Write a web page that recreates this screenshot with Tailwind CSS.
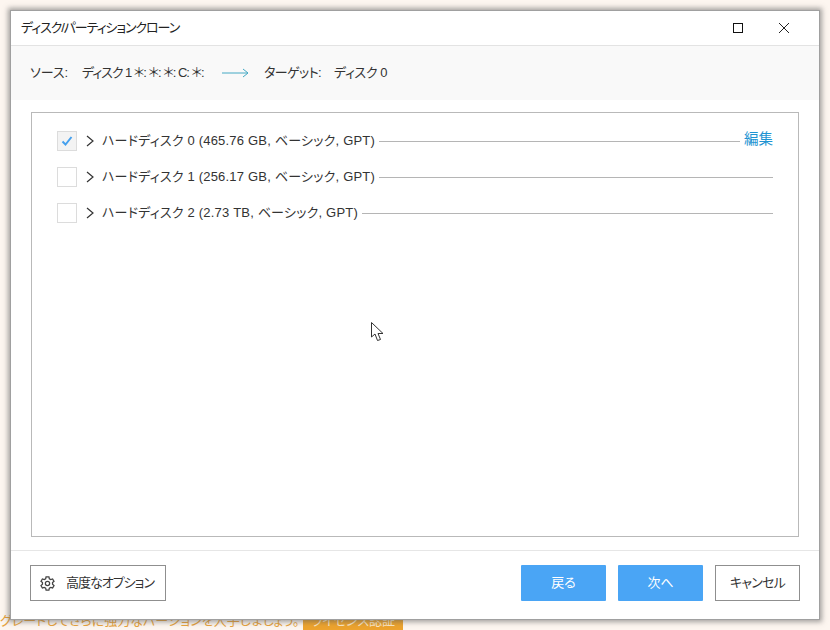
<!DOCTYPE html>
<html lang="ja">
  <head>
    <meta charset="UTF-8" />
    <script src="https://cdn.jsdelivr.net/npm/@tailwindcss/browser@4"></script>
    <title>ディスク/パーティションクローン</title>
  </head>
  <body class="relative h-[630px] w-[830px] overflow-hidden bg-[#fdf6f0] font-['Liberation_Sans','Noto_Sans_CJK_JP',sans-serif] text-[13px] text-[#333] [font-feature-settings:'palt']">
    <!-- page behind the dialog -->
    <div class="absolute left-0 right-0 top-[610px] flex h-[20px] items-end">
      <span class="w-[298px] whitespace-nowrap text-right text-[13px] leading-[18px] text-[#e8a33c]">グレードしてさらに強力なバージョンを入手しましょう。</span>
      <span class="ml-[5px] flex h-[20px] w-[100px] items-end justify-center bg-[#eda32e] text-[13px] leading-[18px] text-[#fbe6c4]">ライセンス認証</span>
    </div>

    <!-- dialog -->
    <div class="absolute left-[10px] top-[10px] flex h-[610px] w-[810px] flex-col border border-[#a0a0a0] bg-white shadow-[0_0_5px_2px_rgba(90,90,90,0.55)]">
      <div class="flex h-[35px] shrink-0 items-center justify-between border-b border-[#e3e3e3] pl-[10px] pr-[29px]">
        <span class="text-[13px] tracking-[-1.1px] text-[#222]">ディスク/パーティションクローン</span>
        <div class="flex items-center gap-[35px]">
          <svg width="10" height="10" viewBox="0 0 10 10"><rect x="0.5" y="0.5" width="9" height="9" fill="none" stroke="#111" /></svg>
          <svg width="12" height="12" viewBox="0 0 12 12"><path d="M1 1L11 11M11 1L1 11" stroke="#222" fill="none" /></svg>
        </div>
      </div>

      <div class="flex h-[54px] shrink-0 items-center whitespace-nowrap bg-[#f9f9f9] pl-[19px] text-[13px] text-[#333]">
        <span class="w-[52px]">ソース:</span>
        <span class="w-[140px] tracking-[-1.05px]">ディスク 1 ＊: ＊: ＊: C: ＊:</span>
        <svg class="mr-[15px] shrink-0" width="27" height="10" viewBox="0 0 27 10"><path d="M0 5H26M21 1L26 5L21 9" stroke="#45a9c4" fill="none" /></svg>
        <span class="w-[70px] tracking-[-0.6px]">ターゲット:</span>
        <span class="tracking-[-0.4px]">ディスク 0</span>
      </div>

      <div class="mx-[20px] mt-[12px] h-[426px] border border-[#b9b9b9] px-[25px] pt-[10px]">
        <div class="flex h-[36px] items-center">
          <div class="flex h-[20px] w-[20px] shrink-0 items-center justify-center border border-[#dcdcdc] bg-[#f3f3f3]">
            <svg width="12" height="10" viewBox="0 0 12 10"><path d="M1.5 5.5L4.5 8.5L10.5 1" stroke="#45a0ee" stroke-width="2" fill="none" /></svg>
          </div>
          <svg class="ml-[9px] mr-[8px] shrink-0" width="8" height="12" viewBox="0 0 8 12"><path d="M1 1L7 6L1 11" stroke="#333" stroke-width="1.2" fill="none" /></svg>
          <span class="whitespace-nowrap tracking-[0.2px]">ハードディスク 0 (465.76 GB, ベーシック, GPT)</span>
          <div class="mx-[4px] h-px grow bg-[#b5b5b5]"></div>
          <span class="mt-[-2px] text-[14.5px] text-[#1f94d2]">編集</span>
        </div>
        <div class="flex h-[36px] items-center">
          <div class="h-[20px] w-[20px] shrink-0 border border-[#dcdcdc] bg-white"></div>
          <svg class="ml-[9px] mr-[8px] shrink-0" width="8" height="12" viewBox="0 0 8 12"><path d="M1 1L7 6L1 11" stroke="#333" stroke-width="1.2" fill="none" /></svg>
          <span class="whitespace-nowrap tracking-[0.2px]">ハードディスク 1 (256.17 GB, ベーシック, GPT)</span>
          <div class="ml-[4px] h-px grow bg-[#b5b5b5]"></div>
        </div>
        <div class="flex h-[36px] items-center">
          <div class="h-[20px] w-[20px] shrink-0 border border-[#dcdcdc] bg-white"></div>
          <svg class="ml-[9px] mr-[8px] shrink-0" width="8" height="12" viewBox="0 0 8 12"><path d="M1 1L7 6L1 11" stroke="#333" stroke-width="1.2" fill="none" /></svg>
          <span class="whitespace-nowrap tracking-[0.2px]">ハードディスク 2 (2.73 TB, ベーシック, GPT)</span>
          <div class="ml-[4px] h-px grow bg-[#b5b5b5]"></div>
        </div>
      </div>

      <div class="mt-[13px] flex h-[69px] items-start justify-between border-t border-[#e6e6e6] px-[19px] pt-[14px]">
        <button class="flex h-[36px] w-[136px] items-center border border-[#8f8f8f] bg-white pl-[8px] tracking-[-1px]">
          <svg class="mr-[10px]" width="17" height="17" viewBox="0 0 24 24" fill="none" stroke="#444" stroke-width="1.8"><circle cx="12" cy="12" r="3" /><path d="M10 2.5h4l.6 2.8 1.9 1.1 2.7-.9 2 3.4-2.1 1.9v2.2l2.1 1.9-2 3.4-2.7-.9-1.9 1.1-.6 2.8h-4l-.6-2.8-1.9-1.1-2.7.9-2-3.4 2.1-1.9v-2.2L2.8 8.9l2-3.4 2.7.9 1.9-1.1z" /></svg>
          高度なオプション
        </button>
        <div class="flex items-center">
          <button class="h-[36px] w-[85px] rounded-[1px] bg-[#4aa5f5] text-white">戻る</button>
          <button class="ml-[12px] h-[36px] w-[85px] rounded-[1px] bg-[#4aa5f5] text-white">次へ</button>
          <button class="ml-[12px] h-[36px] w-[85px] border border-[#8f8f8f] bg-white tracking-[-0.8px]">キャンセル</button>
        </div>
      </div>
    </div>

    <!-- mouse pointer -->
    <svg class="absolute left-[370px] top-[321px]" width="15" height="22" viewBox="0 0 15 22"><path d="M1.5 1.5V16L5 13L7.5 19.5L10.5 18.5L8 12.5H13Z" fill="#fff" stroke="#333" /></svg>
  </body>
</html>
